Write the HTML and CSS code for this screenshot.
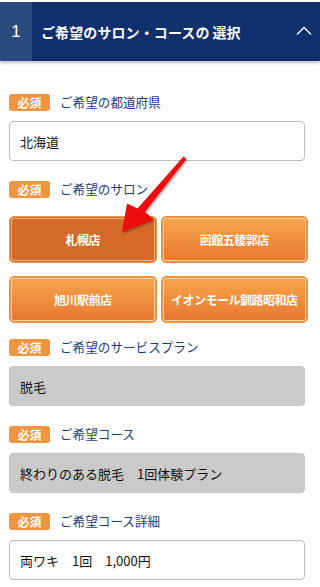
FILE: index.html
```html
<!DOCTYPE html>
<html lang="ja">
<head>
<meta charset="utf-8">
<link rel="stylesheet" href="styles.css">
</head>
<body>
<div class="page">
  <header class="head">
    <div class="num">1</div>
    <div class="title">ご希望のサロン・コースの<span class="gap">選択</span></div>
    <svg class="chev" width="16" height="10" viewBox="0 0 16 10"><path d="M1 8.5 L8 1.5 L15 8.5" fill="none" stroke="#fff" stroke-width="1.4"/></svg>
  </header>
  <main class="content">
    <section class="field first">
      <div class="label"><span class="badge">必須</span><span class="ltext">ご希望の都道府県</span></div>
      <div class="box">北海道</div>
    </section>
    <section class="field">
      <div class="label"><span class="badge">必須</span><span class="ltext">ご希望のサロン</span></div>
      <div class="btns">
        <div class="btn selected">札幌店</div>
        <div class="btn">函館五稜郭店</div>
        <div class="btn">旭川駅前店</div>
        <div class="btn">イオンモール釧路昭和店</div>
      </div>
    </section>
    <section class="field after-btns">
      <div class="label"><span class="badge">必須</span><span class="ltext">ご希望のサービスプラン</span></div>
      <div class="box gray">脱毛</div>
    </section>
    <section class="field">
      <div class="label"><span class="badge">必須</span><span class="ltext">ご希望コース</span></div>
      <div class="box gray">終わりのある脱毛　1回体験プラン</div>
    </section>
    <section class="field">
      <div class="label"><span class="badge">必須</span><span class="ltext">ご希望コース詳細</span></div>
      <div class="box">両ワキ　1回　1,000円</div>
    </section>
  </main>
  <svg class="arrow" width="320" height="587" viewBox="0 0 320 587">
    <defs>
      <filter id="sh" x="-20%" y="-20%" width="140%" height="140%">
        <feDropShadow dx="1" dy="1.5" stdDeviation="1.2" flood-color="#000" flood-opacity="0.35"/>
      </filter>
    </defs>
    <polygon filter="url(#sh)" fill="#ee1010" points="183.5,156.5 186.5,159 145,212 154,219.5 122,232 127,203.5 137.5,208.5"/>
  </svg>
</div>
</body>
</html>
```
FILE: styles.css
```css
* { box-sizing: border-box; }
html, body { margin: 0; padding: 0; background: #fff; }
body {
  font-family: "Noto Sans CJK JP", "Noto Sans", sans-serif;
  width: 320px;
  height: 587px;
  overflow: hidden;
}
.page { position: relative; width: 320px; height: 587px; padding-top: 2px; }
.head {
  display: flex;
  align-items: center;
  height: 59px;
  background: #0f306c;
  color: #fff;
  box-shadow: 0 2px 3px rgba(0,0,0,0.25);
}
.num {
  width: 32px;
  height: 100%;
  background: #2a4b80;
  display: flex;
  align-items: center;
  justify-content: center;
  font-size: 17px;
  font-family: "Liberation Sans", sans-serif;
}
.title {
  flex: 1;
  padding-left: 9px;
  font-size: 14px;
  font-weight: bold;
  letter-spacing: 0.1px;
  white-space: nowrap;
}
.gap { margin-left: 3px; }
.chev { margin-right: 8px; margin-top: -2px; }
.content { padding: 0 15px 0 9px; }
.field { margin-top: 20px; }
.field.first { margin-top: 33px; }
.field.after-btns { margin-top: 16px; }
.label { display: flex; align-items: center; height: 17px; }
.badge {
  width: 41px;
  height: 17px;
  background: #f0953f;
  color: #fff;
  border-radius: 3px;
  font-size: 12px;
  font-weight: bold;
  display: flex;
  align-items: center;
  justify-content: center;
  line-height: 1;
}
.ltext {
  margin-left: 10px;
  font-size: 12.6px;
  color: #1d3c7a;
  line-height: 1;
}
.box {
  margin-top: 10px;
  height: 40px;
  border: 1px solid #bdbdbd;
  border-radius: 4px;
  display: flex;
  align-items: center;
  padding-left: 10px;
  font-size: 13px;
  color: #111;
  background: #fff;
}
.box.gray { background: #cacaca; border-color: #c6c6c6; }
.btns {
  margin-top: 18px;
  margin-right: -3px;
  display: grid;
  grid-template-columns: 1fr 1fr;
  column-gap: 4px;
  row-gap: 13px;
}
.btn {
  height: 47px;
  border-radius: 5px;
  border: 1px solid #ec8a3c;
  background: linear-gradient(#f6a64d, #e8772f);
  box-shadow: inset 0 0 0 1px #f39a4a, inset 0 0 0 2px rgba(255,215,170,0.85);
  color: #fff;
  font-weight: bold;
  font-size: 12px;
  letter-spacing: -0.5px;
  display: flex;
  align-items: center;
  justify-content: center;
  white-space: nowrap;
}
.btn.selected {
  background: #d56a28;
  border-color: #eb9a4c;
  box-shadow: inset 0 0 0 1px #d56a28, inset 0 0 0 2px rgba(245,190,140,0.9);
}
.arrow { position: absolute; left: 0; top: 0; pointer-events: none; }
```
